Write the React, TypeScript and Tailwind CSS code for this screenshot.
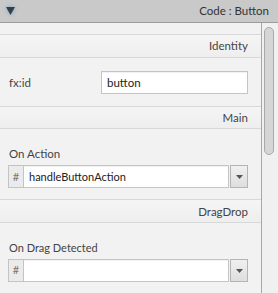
import React from "react";

const font = { fontFamily: "Lato, 'Noto Sans', sans-serif" };

function SectionHeader({ title }: { title: string }) {
  return (
    <div className="h-[24px] border-y border-[#d8d8d8] bg-gradient-to-b from-[#f5f5f5] to-[#eeeeee] flex items-center justify-end pr-[13px] text-[11.5px] text-[#444]">
      {title}
    </div>
  );
}

function Combo({ value }: { value: string }) {
  return (
    <div className="flex items-stretch h-[23px] ml-[8px] mr-[13px]">
      <div className="w-[16px] border border-[#c4c4c4] bg-[#ebebeb] flex items-center justify-center text-[11px] text-[#777]">
        #
      </div>
      <div className="flex-1 border border-l-0 border-[#c4c4c4] bg-white shadow-[inset_0_1px_1px_rgba(0,0,0,0.06)] flex items-center pl-[5px] text-[11px] text-[#222]">
        {value}
      </div>
      <div className="ml-[1px] w-[18px] border border-[#b4b4b4] bg-gradient-to-b from-[#f0f0f0] to-[#dedede] flex items-center justify-center">
        <svg width="7" height="4" viewBox="0 0 7 4">
          <path d="M0 0 H7 L3.5 4 Z" fill="#555" />
        </svg>
      </div>
    </div>
  );
}

export default function App() {
  return (
    <div className="w-[278px] h-[293px] overflow-hidden flex flex-col bg-[#f2f2f2]" style={font}>
      <div className="h-[23px] shrink-0 bg-[#c9c9c9] border-b border-[#9c9c9c] flex items-center justify-between pl-[6px] pr-[9px]">
        <svg width="9" height="8" viewBox="0 0 9 8" className="drop-shadow-[0_0_2px_rgba(80,170,230,0.9)]">
          <path d="M0 0 H9 L4.5 8 Z" fill="#3d3d3d" />
        </svg>
        <span className="text-[11.5px] text-[#333]">Code : Button</span>
      </div>
      <div className="flex flex-1 min-h-0">
        <div className="w-[261px] flex flex-col pt-[11px]">
          <SectionHeader title="Identity" />
          <div className="flex items-center justify-between pl-[9px] pr-[13px] pt-[13px] pb-[12px]">
            <span className="text-[11.5px] text-[#444]">fx:id</span>
            <div className="w-[147px] h-[23px] border border-[#c4c4c4] bg-white shadow-[inset_0_1px_1px_rgba(0,0,0,0.06)] flex items-center pl-[5px] text-[11.5px] text-[#222]">
              button
            </div>
          </div>
          <SectionHeader title="Main" />
          <div className="pt-[17px] pb-[11px]">
            <div className="pl-[9px] h-[16px] leading-[16px] text-[11.5px] text-[#444] mb-[3px]">On Action</div>
            <Combo value="handleButtonAction" />
          </div>
          <SectionHeader title="DragDrop" />
          <div className="pt-[17px] pb-[11px]">
            <div className="pl-[9px] h-[16px] leading-[16px] text-[11px] text-[#444] mb-[3px]">On Drag Detected</div>
            <Combo value="" />
          </div>
        </div>
        <div className="flex-1 border-l border-[#a8a8a8] bg-[#f0f0f0] pt-[4px] pl-[2px]">
          <div className="w-[10px] h-[128px] rounded-full border border-[#a9a9a9] bg-[#d6d6d6]" />
        </div>
      </div>
    </div>
  );
}
